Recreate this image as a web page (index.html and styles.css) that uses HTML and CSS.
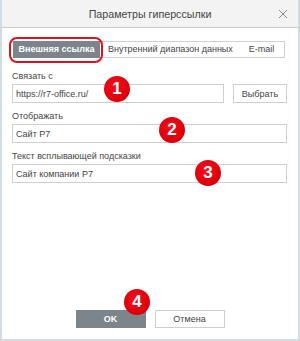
FILE: index.html
```html
<!DOCTYPE html>
<html lang="ru">
    <head>
        <meta charset="utf-8">
        <title>Параметры гиперссылки</title>
        <link rel="stylesheet" href="styles.css">
    </head>
    <body>
        <div class="dialog">
            <div class="dialog-header">
                <span class="dialog-title">Параметры гиперссылки</span>
                <span class="dialog-close">
                    <svg width="10" height="10" viewBox="0 0 10 10">
                        <path d="M1 1 L9 9 M9 1 L1 9" stroke="#8a8a8a" stroke-width="1" fill="none"/>
                    </svg>
                </span>
            </div>
            <div class="dialog-body">
                <div class="tabs">
                    <div class="tab tab--active">Внешняя ссылка</div>
                    <div class="tab">Внутренний диапазон данных</div>
                    <div class="tab">E-mail</div>
                    <div class="mark-ring"></div>
                </div>
                <div class="field field--first">
                    <label>Связать с</label>
                    <div class="field-row">
                        <input type="text" class="text-input" value="https://r7-office.ru/">
                        <button class="btn btn--light btn--pick">Выбрать</button>
                    </div>
                    <span class="badge badge--1">1</span>
                </div>
                <div class="field">
                    <label>Отображать</label>
                    <input type="text" class="text-input" value="Сайт Р7">
                    <span class="badge badge--2">2</span>
                </div>
                <div class="field">
                    <label>Текст всплывающей подсказки</label>
                    <input type="text" class="text-input" value="Сайт компании Р7">
                    <span class="badge badge--3">3</span>
                </div>
            </div>
            <div class="dialog-footer">
                <button class="btn btn--primary">OK</button>
                <button class="btn btn--light">Отмена</button>
                <span class="badge badge--4">4</span>
            </div>
        </div>
    </body>
</html>
```

FILE: styles.css
```css
html, body {
    margin: 0;
    padding: 0;
    font-family: 'Liberation Sans', Arial, sans-serif;
    font-size: 9px;
    color: #444;
    background: #fff;
}
.dialog {
    width: 300px;
    height: 341px;
    box-sizing: border-box;
    border: 2px solid #d3dbe2;
    border-top: none;
    display: flex;
    flex-direction: column;
    position: relative;
}
.dialog-header {
    height: 28px;
    box-sizing: border-box;
    border-bottom: 1px solid #cbcbcb;
    background: #f3f3f3;
    display: flex;
    align-items: center;
    justify-content: center;
    position: relative;
}
.dialog-title {
    font-size: 10.7px;
    color: #444;
}
.dialog-close {
    position: absolute;
    right: 10px;
    top: 9px;
    line-height: 0;
}
.dialog-body {
    flex: 1;
    padding: 13px 11px 0 10px;
}
.tabs {
    display: flex;
    width: 272px;
    height: 17px;
    margin-left: 1px;
    border: 1px solid #d0d0d0;
    box-sizing: border-box;
    position: relative;
}
.tab {
    line-height: 15px;
    padding: 0 8px;
    white-space: nowrap;
}
.tab--active {
    width: 87px;
    box-sizing: border-box;
    margin: -1px 0 -1px -1px;
    line-height: 17px;
    background: #7d858c;
    color: #fff;
    font-weight: bold;
    text-align: center;
    padding: 0;
}
.tab:last-of-type {
    margin-left: auto;
}
.mark-ring {
    position: absolute;
    left: -5px;
    top: -5px;
    width: 94px;
    height: 26px;
    box-sizing: border-box;
    border: 2px solid #e3101b;
    border-radius: 8px;
}
.field {
    margin-top: 6px;
    position: relative;
}
.field--first {
    margin-top: 11px;
}
.field > label {
    display: block;
    line-height: 14px;
    margin-bottom: 1px;
}
.field-row {
    display: flex;
    gap: 9px;
}
.text-input {
    display: block;
    width: 100%;
    height: 19px;
    box-sizing: border-box;
    border: 1px solid #cfcfcf;
    padding: 0 3px;
    font-family: inherit;
    font-size: 9px;
    color: #444;
    outline: none;
}
.field-row .text-input {
    width: 212px;
    flex: none;
}
.btn {
    height: 19px;
    box-sizing: border-box;
    font-family: inherit;
    font-size: 9px;
    padding: 0;
    cursor: pointer;
}
.btn--light {
    background: #fff;
    border: 1px solid #cfcfcf;
    color: #444;
}
.btn--pick {
    width: 54px;
}
.btn--primary {
    background: #7d858c;
    border: 1px solid #7d858c;
    color: #fff;
    font-weight: bold;
}
.dialog-footer {
    display: flex;
    justify-content: center;
    gap: 9px;
    padding: 0 0 11px;
    position: relative;
}
.dialog-footer .btn {
    width: 70px;
    height: 18px;
}
.badge {
    position: absolute;
    width: 26px;
    height: 26px;
    border-radius: 50%;
    background: radial-gradient(circle at 45% 40%, #f0121c 0%, #e0000b 60%, #c4000a 100%);
    color: #fff;
    font-weight: bold;
    font-size: 17px;
    line-height: 26px;
    text-align: center;
}
.badge--1 {
    left: 92px;
    top: 7px;
}
.badge--2 {
    left: 147px;
    top: 8px;
}
.badge--3 {
    left: 183px;
    top: 11px;
}
.badge--4 {
    left: 122px;
    top: -21px;
}
```
